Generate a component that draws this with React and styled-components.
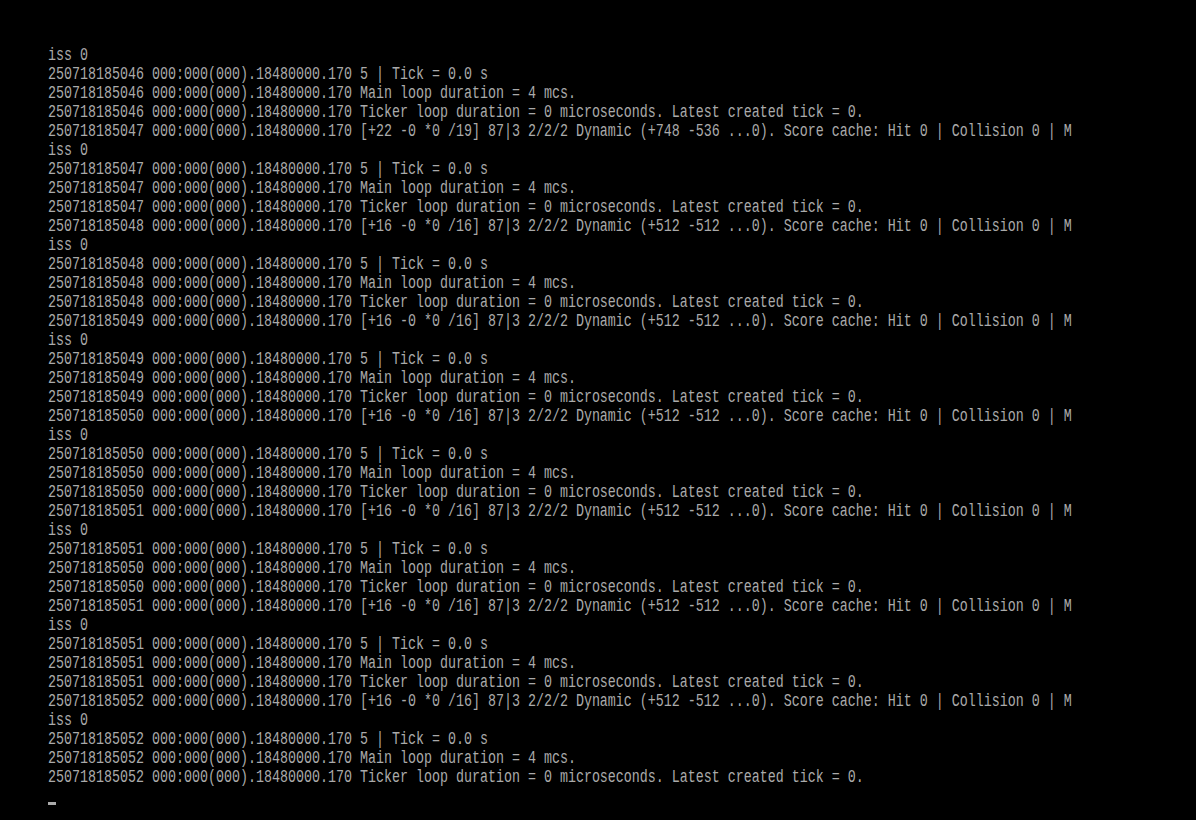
import React from "react";
import styled, {createGlobalStyle} from "styled-components";

const Global = createGlobalStyle`
  html, body {
    margin: 0;
    padding: 0;
    background-color: #000000;
  }
`
const Screen = styled.div`
  width: 1196px;
  height: 820px;
  padding: 46px 0 0 48px;
  box-sizing: border-box;
  overflow: hidden;

  background-color: #000000;
`
const Line = styled.div`
  height: 19px;
  line-height: 19px;
  white-space: pre;

  font-family: "Liberation Mono", "DejaVu Sans Mono", monospace;
  font-size: 13.333px;
  color: #aaaaaa;
  transform: scaleY(1.32);
`
const CursorRow = styled.div`
  height: 19px;
  display: flex;
  align-items: flex-end;
`
const Cursor = styled.div`
  width: 8px;
  height: 3px;
  margin-bottom: 1px;
  background-color: #aaaaaa;
`

const PREFIX = "000:000(000).18480000.170"

let block = (a, b, c, d, dyn) => [
    `2507181850${a} ${PREFIX} 5 | Tick = 0.0 s`,
    `2507181850${b} ${PREFIX} Main loop duration = 4 mcs.`,
    `2507181850${c} ${PREFIX} Ticker loop duration = 0 microseconds. Latest created tick = 0.`,
    `2507181850${d} ${PREFIX} ${dyn}`,
]

const first = "[+22 -0 *0 /19] 87|3 2/2/2 Dynamic (+748 -536 ...0). Score cache: Hit 0 | Collision 0 | M"
const rest = "[+16 -0 *0 /16] 87|3 2/2/2 Dynamic (+512 -512 ...0). Score cache: Hit 0 | Collision 0 | M"

const lines = [
    "iss 0",
    ...block("46", "46", "46", "47", first),
    "iss 0",
    ...block("47", "47", "47", "48", rest),
    "iss 0",
    ...block("48", "48", "48", "49", rest),
    "iss 0",
    ...block("49", "49", "49", "50", rest),
    "iss 0",
    ...block("50", "50", "50", "51", rest),
    "iss 0",
    ...block("51", "50", "50", "51", rest),
    "iss 0",
    ...block("51", "51", "51", "52", rest),
    "iss 0",
    ...block("52", "52", "52", "52", rest).slice(0, 3),
]

let App = () => {
    return (
        <>
            <Global/>
            <Screen>
                {lines.map((l, i) => <Line key={i}>{l}</Line>)}
                <CursorRow>
                    <Cursor/>
                </CursorRow>
            </Screen>
        </>
    )
}
export default App;
